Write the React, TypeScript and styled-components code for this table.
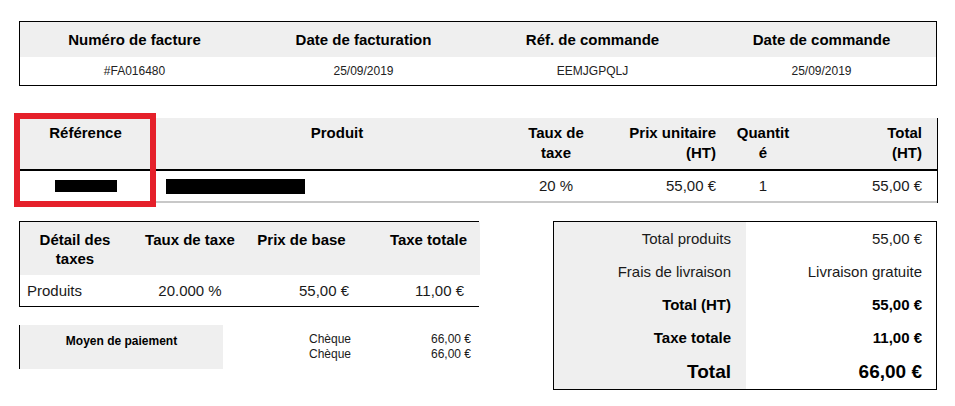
import React from 'react';
import styled, { createGlobalStyle } from 'styled-components';

type Column = { title: string; align: 'left' | 'center' | 'right' };

const invoiceHeader = [
  { title: 'Numéro de facture', value: '#FA016480' },
  { title: 'Date de facturation', value: '25/09/2019' },
  { title: 'Réf. de commande', value: 'EEMJGPQLJ' },
  { title: 'Date de commande', value: '25/09/2019' },
];

const productColumns: Column[] = [
  { title: 'Référence', align: 'center' },
  { title: 'Produit', align: 'center' },
  { title: 'Taux de taxe', align: 'center' },
  { title: 'Prix unitaire (HT)', align: 'right' },
  { title: 'Quantité', align: 'center' },
  { title: 'Total (HT)', align: 'right' },
];

// header padding shifts the centred titles a little, as in the pdf
const taxColumns = [
  { title: 'Détail des taxes', pad: '8px 8px 0' },
  { title: 'Taux de taxe', pad: '8px 8px 0' },
  { title: 'Prix de base', pad: '8px 14px 0 2px' },
  { title: 'Taxe totale', pad: '8px 2px 0 14px' },
];

const payments = [
  { method: 'Chèque', amount: '66,00 €' },
  { method: 'Chèque', amount: '66,00 €' },
];

const totals = [
  { label: 'Total produits', value: '55,00 €', kind: 'normal' },
  { label: 'Frais de livraison', value: 'Livraison gratuite', kind: 'normal' },
  { label: 'Total (HT)', value: '55,00 €', kind: 'bold' },
  { label: 'Taxe totale', value: '11,00 €', kind: 'bold' },
  { label: 'Total', value: '66,00 €', kind: 'big' },
] as const;

export default function App() {
  return (
    <>
      <GlobalStyle />
      <Page>
        <SummaryTable>
          {invoiceHeader.map((item) => (
            <SummaryHead key={item.title}>{item.title}</SummaryHead>
          ))}
          {invoiceHeader.map((item) => (
            <SummaryValue key={item.title}>{item.value}</SummaryValue>
          ))}
        </SummaryTable>

        <ProductTable>
          <Highlight />
          <ProductHeadRow>
            {productColumns.map((col, i) => (
              <ProductHead key={col.title} $align={col.align} $col={i}>
                {col.title}
              </ProductHead>
            ))}
          </ProductHeadRow>
          <ProductRow>
            <ProductCell $align="center" $col={0}>
              <Redacted $w={62} $h={12} />
            </ProductCell>
            <ProductCell $align="left" $col={1}>
              <Redacted $w={139} $h={15} />
            </ProductCell>
            <ProductCell $align="center" $col={2}>20 %</ProductCell>
            <ProductCell $align="right" $col={3}>55,00 €</ProductCell>
            <ProductCell $align="center" $col={4}>1</ProductCell>
            <ProductCell $align="right" $col={5}>55,00 €</ProductCell>
          </ProductRow>
        </ProductTable>

        <BottomSection>
          <LeftColumn>
            <TaxTable>
              {taxColumns.map((col) => (
                <TaxHead key={col.title} $pad={col.pad}>
                  {col.title}
                </TaxHead>
              ))}
              <TaxCell $align="left">Produits</TaxCell>
              <TaxCell $align="center">20.000 %</TaxCell>
              <TaxCell $align="right">55,00 €</TaxCell>
              <TaxCell $align="right">11,00 €</TaxCell>
            </TaxTable>

            <PaymentBlock>
              <PaymentLabel>Moyen de paiement</PaymentLabel>
              <PaymentMethods>
                {payments.map((p, i) => (
                  <div key={i}>{p.method}</div>
                ))}
              </PaymentMethods>
              <PaymentAmounts>
                {payments.map((p, i) => (
                  <div key={i}>{p.amount}</div>
                ))}
              </PaymentAmounts>
            </PaymentBlock>
          </LeftColumn>

          <TotalsBox>
            {totals.map((row) => (
              <TotalsRow key={row.label} $kind={row.kind}>
                <TotalsLabel>{row.label}</TotalsLabel>
                <TotalsValue>{row.value}</TotalsValue>
              </TotalsRow>
            ))}
          </TotalsBox>
        </BottomSection>
      </Page>
    </>
  );
}

const GlobalStyle = createGlobalStyle`
  html, body {
    margin: 0;
    background: #fff;
  }
  body {
    font-family: "Liberation Sans", Arial, sans-serif;
    color: #1a1a1a;
  }
  * {
    box-sizing: border-box;
  }
`;

const Page = styled.div`
  padding: 21px 0 0 19px;
  width: 937px;
`;

const SummaryTable = styled.div`
  display: grid;
  grid-template-columns: repeat(4, 1fr);
  grid-template-rows: 35px 28px;
  width: 918px;
  border: 1px solid #000;
`;

const SummaryHead = styled.div`
  display: flex;
  align-items: center;
  justify-content: center;
  background: #efefef;
  font-size: 15px;
  font-weight: bold;
  color: #000;
`;

const SummaryValue = styled.div`
  display: flex;
  align-items: center;
  justify-content: center;
  font-size: 12px;
  color: #222;
`;

const productGrid = '133px 370px 68px 132px 82px 133px';
const productPadding = ['0 6px', '0 14px', '0 4px', '0 6px 0 20px', '0 13px', '0 15px 0 60px'];

const ProductTable = styled.div`
  position: relative;
  width: 919px;
  margin-top: 32px;
  border-right: 1px solid #000;
`;

const Highlight = styled.div`
  position: absolute;
  left: -5px;
  top: -5px;
  width: 142px;
  height: 94px;
  border: 6px solid #e5202a;
  z-index: 2;
`;

const ProductHeadRow = styled.div`
  display: grid;
  grid-template-columns: ${productGrid};
  height: 53px;
  background: #efefef;
  border-bottom: 2px solid #000;
`;

const ProductRow = styled.div`
  display: grid;
  grid-template-columns: ${productGrid};
  height: 32px;
  border-bottom: 2px solid #c8c8c8;
  align-items: center;
`;

const ProductHead = styled.div<{ $align: string; $col: number }>`
  padding: ${(p) => productPadding[p.$col]};
  padding-top: 5px;
  text-align: ${(p) => p.$align};
  font-size: 15px;
  font-weight: bold;
  line-height: 20px;
  color: #000;
  word-break: ${(p) => (p.$col === 4 ? 'break-all' : 'normal')};
`;

const ProductCell = styled.div<{ $align: string; $col: number }>`
  padding: ${(p) => productPadding[p.$col]};
  text-align: ${(p) => p.$align};
  font-size: 15px;
  line-height: 18px;
  display: flex;
  justify-content: ${(p) => (p.$align === 'left' ? 'flex-start' : p.$align === 'right' ? 'flex-end' : 'center')};
  align-items: center;
`;

const Redacted = styled.span<{ $w: number; $h: number }>`
  display: inline-block;
  width: ${(p) => p.$w}px;
  height: ${(p) => p.$h}px;
  background: #000;
`;

const BottomSection = styled.div`
  display: flex;
  justify-content: space-between;
  align-items: flex-start;
  width: 918px;
  margin-top: 18px;
`;

const LeftColumn = styled.div`
  display: flex;
  flex-direction: column;
  gap: 18px;
  width: 460px;
`;

const TaxTable = styled.div`
  display: grid;
  grid-template-columns: 110px 120px 115px 115px;
  grid-template-rows: 53px 31px;
  border-top: 1px solid #000;
  border-bottom: 1px solid #000;
  border-left: 1px solid #000;
`;

const TaxHead = styled.div<{ $pad: string }>`
  background: #efefef;
  padding: ${(p) => p.$pad};
  text-align: center;
  font-size: 15px;
  font-weight: bold;
  line-height: 19px;
  color: #000;
`;

const TaxCell = styled.div<{ $align: string }>`
  display: flex;
  align-items: center;
  justify-content: ${(p) => (p.$align === 'left' ? 'flex-start' : p.$align === 'right' ? 'flex-end' : 'center')};
  padding: ${(p) => (p.$align === 'left' ? '0 0 0 7px' : p.$align === 'right' ? '0 16px 0 0' : '0')};
  font-size: 15px;
`;

const PaymentBlock = styled.div`
  display: grid;
  grid-template-columns: 203px 158px 99px;
  height: 44px;
  border-left: 1px solid #000;
  font-size: 12px;
`;

const PaymentLabel = styled.div`
  background: #efefef;
  padding-top: 9px;
  text-align: center;
  font-weight: bold;
  color: #000;
`;

const PaymentMethods = styled.div`
  padding: 7px 0 0 86px;
  line-height: 15px;
`;

const PaymentAmounts = styled.div`
  padding: 7px 9px 0 0;
  line-height: 15px;
  text-align: right;
`;

const TotalsBox = styled.div`
  width: 384px;
  border: 1px solid #000;
`;

const TotalsLabel = styled.div`
  background: #efefef;
  padding-right: 15px;
  display: flex;
  align-items: center;
  justify-content: flex-end;
`;

const TotalsValue = styled.div`
  padding-right: 14px;
  display: flex;
  align-items: center;
  justify-content: flex-end;
`;

const TotalsRow = styled.div<{ $kind: 'normal' | 'bold' | 'big' }>`
  display: grid;
  grid-template-columns: 192px 1fr;
  height: ${(p) => (p.$kind === 'big' ? '35px' : '33px')};
  font-size: ${(p) => (p.$kind === 'big' ? '19px' : '15px')};
  font-weight: ${(p) => (p.$kind === 'normal' ? 'normal' : 'bold')};
  color: ${(p) => (p.$kind === 'normal' ? '#1a1a1a' : '#000')};
`;
